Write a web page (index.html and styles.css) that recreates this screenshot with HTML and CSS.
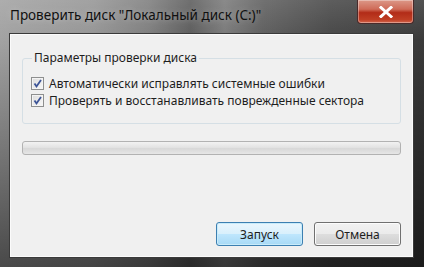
FILE: index.html
```html
<!DOCTYPE html>
<html lang="ru">
<head>
<meta charset="utf-8">
<title>Проверить диск</title>
<link rel="stylesheet" href="styles.css">
</head>
<body>
<div class="window">
  <div class="titlebar">
    <span class="title">Проверить диск "Локальный диск (C:)"</span>
    <button class="close" aria-label="Закрыть">
      <svg width="14" height="12" viewBox="0 0 14 12"><path d="M2 1.5 L12 10.5 M12 1.5 L2 10.5" stroke="#fff" stroke-width="3" stroke-linecap="square"/></svg>
    </button>
  </div>
  <div class="client">
    <fieldset class="group">
      <legend class="legend">Параметры проверки диска</legend>
      <label class="check">
        <span class="box"><svg width="11" height="11" viewBox="0 0 11 11"><path d="M2.5 5.5 L4.5 8.5 L9 2" fill="none" stroke="#3c5497" stroke-width="1.8"/></svg></span>
        <span>Автоматически исправлять системные ошибки</span>
      </label>
      <label class="check">
        <span class="box"><svg width="11" height="11" viewBox="0 0 11 11"><path d="M2.5 5.5 L4.5 8.5 L9 2" fill="none" stroke="#3c5497" stroke-width="1.8"/></svg></span>
        <span>Проверять и восстанавливать поврежденные сектора</span>
      </label>
    </fieldset>
    <div class="progress"></div>
    <div class="buttons">
      <button class="btn default">Запуск</button>
      <button class="btn">Отмена</button>
    </div>
  </div>
</div>
</body>
</html>
```
FILE: styles.css
```css
html, body {
  margin: 0;
  padding: 0;
  background: #2a2a2a;
}
.window {
  width: 424px;
  height: 267px;
  box-sizing: border-box;
  display: flex;
  flex-direction: column;
  padding: 0 10px 9px 9px;
  background:
    linear-gradient(to bottom, rgba(255,255,255,0.12) 0%, rgba(0,0,0,0) 15%, rgba(0,0,0,0.55) 100%),
    linear-gradient(to right, #a2a2a2 0%, #959595 22%, #7e7e7e 35%, #5c5c5c 45%, #7a7a7a 53%, #5e5e5e 62%, #474747 78%, #3a3a3a 100%);
  font-family: "Noto Sans", "Open Sans", sans-serif;
  font-size: 12px;
  color: #1e1e1e;
}
.titlebar {
  height: 33px;
  display: flex;
  align-items: flex-start;
  justify-content: space-between;
}
.title {
  margin-top: 6px;
  margin-left: 1px;
  font-size: 13.5px;
  color: #101010;
  text-shadow: 0 0 6px rgba(255,255,255,0.35);
}
.close {
  width: 57px;
  height: 24px;
  margin-right: 0;
  padding: 0;
  border: 1px solid #4a2a2a;
  border-top: none;
  border-radius: 0 0 4px 4px;
  background: linear-gradient(to bottom, #dc9888 0%, #cf6b58 40%, #b22c18 55%, #bf3e24 85%, #d2664e 100%);
  box-shadow: inset 0 0 0 1px rgba(255,255,255,0.35);
  display: flex;
  align-items: center;
  justify-content: center;
}
.client {
  flex: 1;
  background: #f0f0f0;
  border: 1px solid #3a3a3a;
  box-shadow: inset 0 0 0 1px #fbfbfb;
  padding: 16px 12px 0 12px;
  display: flex;
  flex-direction: column;
}
.group {
  margin: 0;
  padding: 9px 0 10px 8px;
  border: 1px solid #d5dfe5;
  border-radius: 3px;
  height: 74px;
  box-sizing: border-box;
}
.legend {
  padding: 0 2px;
  margin-left: 1px;
  line-height: 16px;
}
.check {
  display: flex;
  align-items: center;
  gap: 5px;
  height: 17px;
  white-space: nowrap;
}
.box {
  width: 11px;
  height: 11px;
  border: 1px solid #8e8f8f;
  background: linear-gradient(135deg, #dcdcdc, #f8f8f8);
  box-shadow: inset 0 0 0 1px #f4f4f4;
  display: flex;
}
.progress {
  margin-top: 17px;
  height: 14px;
  box-sizing: border-box;
  border: 1px solid #b2b2b2;
  border-radius: 3px;
  background: linear-gradient(to bottom, #f2f2f2 0%, #e3e3e3 45%, #d8d8d8 55%, #e6e6e6 100%);
}
.buttons {
  margin-top: 67px;
  display: flex;
  justify-content: flex-end;
  gap: 11px;
}
.btn {
  width: 87px;
  height: 24px;
  padding: 0;
  font-family: inherit;
  font-size: 12px;
  color: #1e1e1e;
  border: 1px solid #707070;
  border-radius: 3px;
  background: linear-gradient(to bottom, #f2f2f2 0%, #ebebeb 48%, #dddddd 52%, #cfcfcf 100%);
  box-shadow: inset 0 0 0 1px #fcfcfc;
}
.btn.default {
  border-color: #3c7fb1;
  background: linear-gradient(to bottom, #eaf6fd 0%, #d9f0fc 48%, #bee6fd 52%, #a7d9f5 100%);
  box-shadow: inset 0 0 0 1px #c8ebfa;
}
```
